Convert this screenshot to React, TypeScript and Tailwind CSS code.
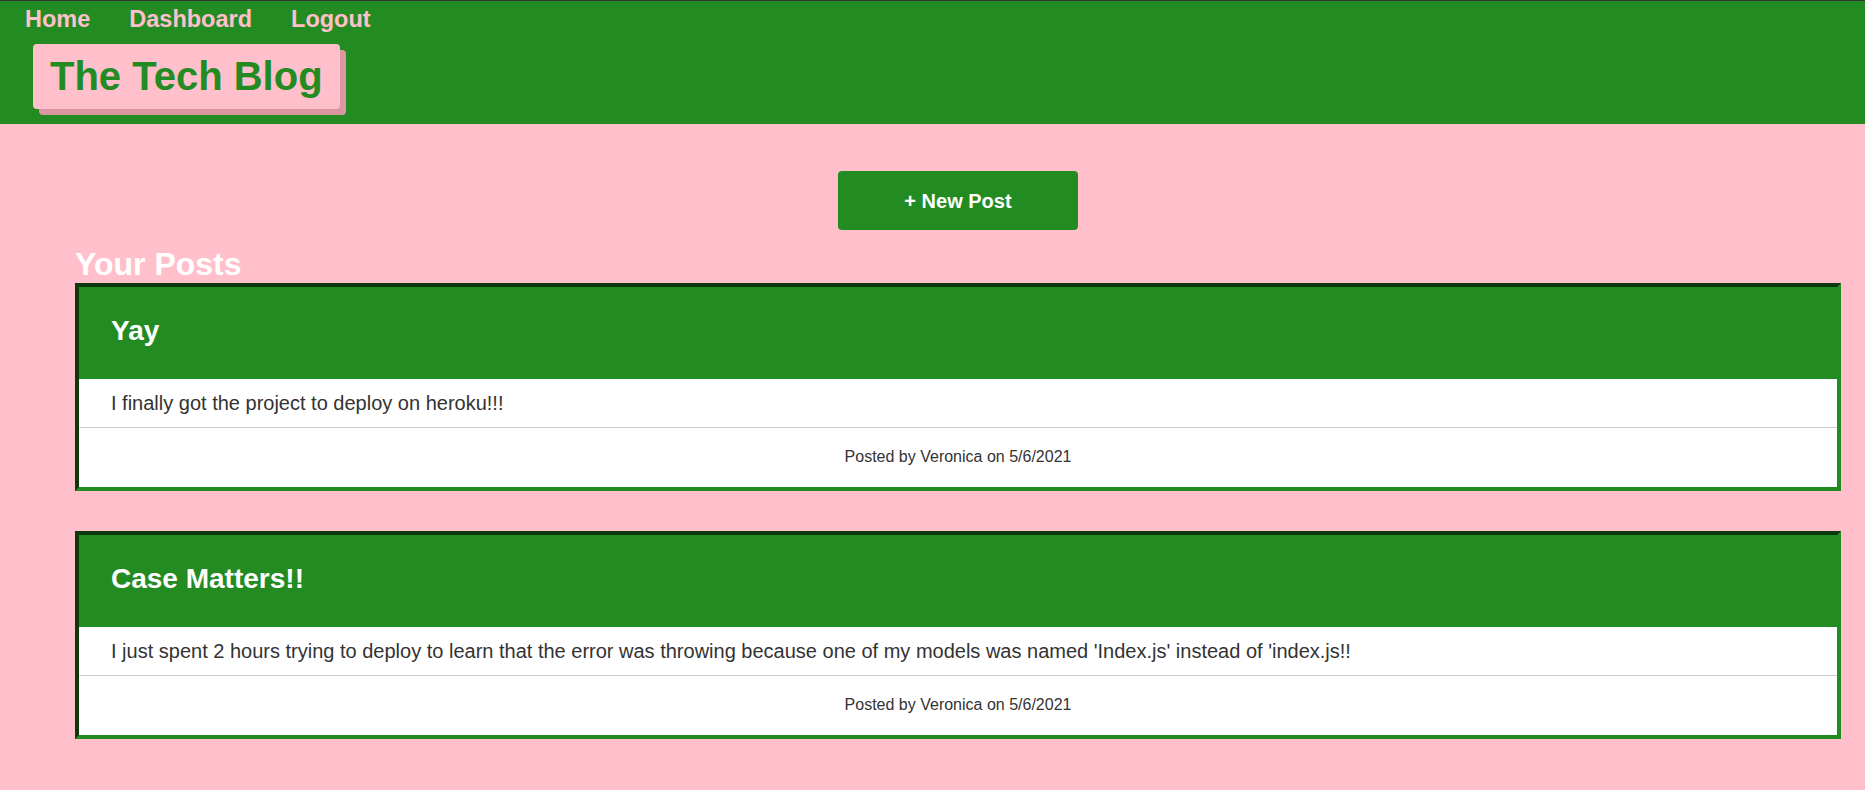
const posts = [
  {
    title: "Yay",
    body: "I finally got the project to deploy on heroku!!!",
    author: "Veronica",
    date: "5/6/2021",
  },
  {
    title: "Case Matters!!",
    body: "I just spent 2 hours trying to deploy to learn that the error was throwing because one of my models was named 'Index.js' instead of 'index.js!!",
    author: "Veronica",
    date: "5/6/2021",
  },
];

const PostCard = ({ post }: { post: (typeof posts)[number] }) => (
  <div className="flex flex-col border-4 border-[#228b22] [border-style:inset] bg-white">
    <div className="h-[92px] bg-[#228b22] pl-8 pt-[28px]">
      <h2 className="text-[28px] font-bold leading-[1.15] text-white">{post.title}</h2>
    </div>
    <div className="h-[49px] border-b border-[#cccccc] pl-8 pt-[13px]">
      <p className="text-[20px] leading-[1.15] text-[#333333]">{post.body}</p>
    </div>
    <div className="h-[59px] pt-[20px] text-center">
      <p className="text-[16px] leading-[1.15] text-[#333333]">
        Posted by {post.author} on {post.date}
      </p>
    </div>
  </div>
);

const App = () => {
  return (
    <div className="min-h-[790px] bg-[#ffc0cb] font-['Liberation_Sans',Arial,sans-serif]">
      <header className="h-[124px] border-t border-[#333333] bg-[#228b22]">
        <nav className="flex gap-[39px] pl-[25px] pt-[5px]">
          <a className="text-[23.5px] font-bold leading-[1.15] text-[#ffc0cb]" href="#">Home</a>
          <a className="text-[23.5px] font-bold leading-[1.15] text-[#ffc0cb]" href="#">Dashboard</a>
          <a className="text-[23.5px] font-bold leading-[1.15] text-[#ffc0cb]" href="#">Logout</a>
        </nav>
        <div className="ml-[33px] mt-[11px] inline-block rounded-[4px] bg-[#ffc0cb] px-[17px] pb-[10px] pt-[9px] shadow-[6px_6px_0_#db96a2]">
          <h1 className="text-[40px] font-bold leading-[1.15] text-[#228b22]">The Tech Blog</h1>
        </div>
      </header>

      <main className="ml-[75px] mr-[24px] flex flex-col pb-12">
        <div className="mt-[47px] flex justify-center">
          <button className="flex h-[59px] w-[240px] items-center justify-center rounded-[4px] bg-[#228b22] text-[20px] font-bold text-white">
            + New Post
          </button>
        </div>
        <h2 className="mt-[16px] text-[32px] font-bold leading-[1.15] text-white">Your Posts</h2>
        <div className="flex flex-col gap-10">
          {posts.map((post) => (
            <PostCard key={post.title} post={post} />
          ))}
        </div>
      </main>
    </div>
  );
};

export default App;
